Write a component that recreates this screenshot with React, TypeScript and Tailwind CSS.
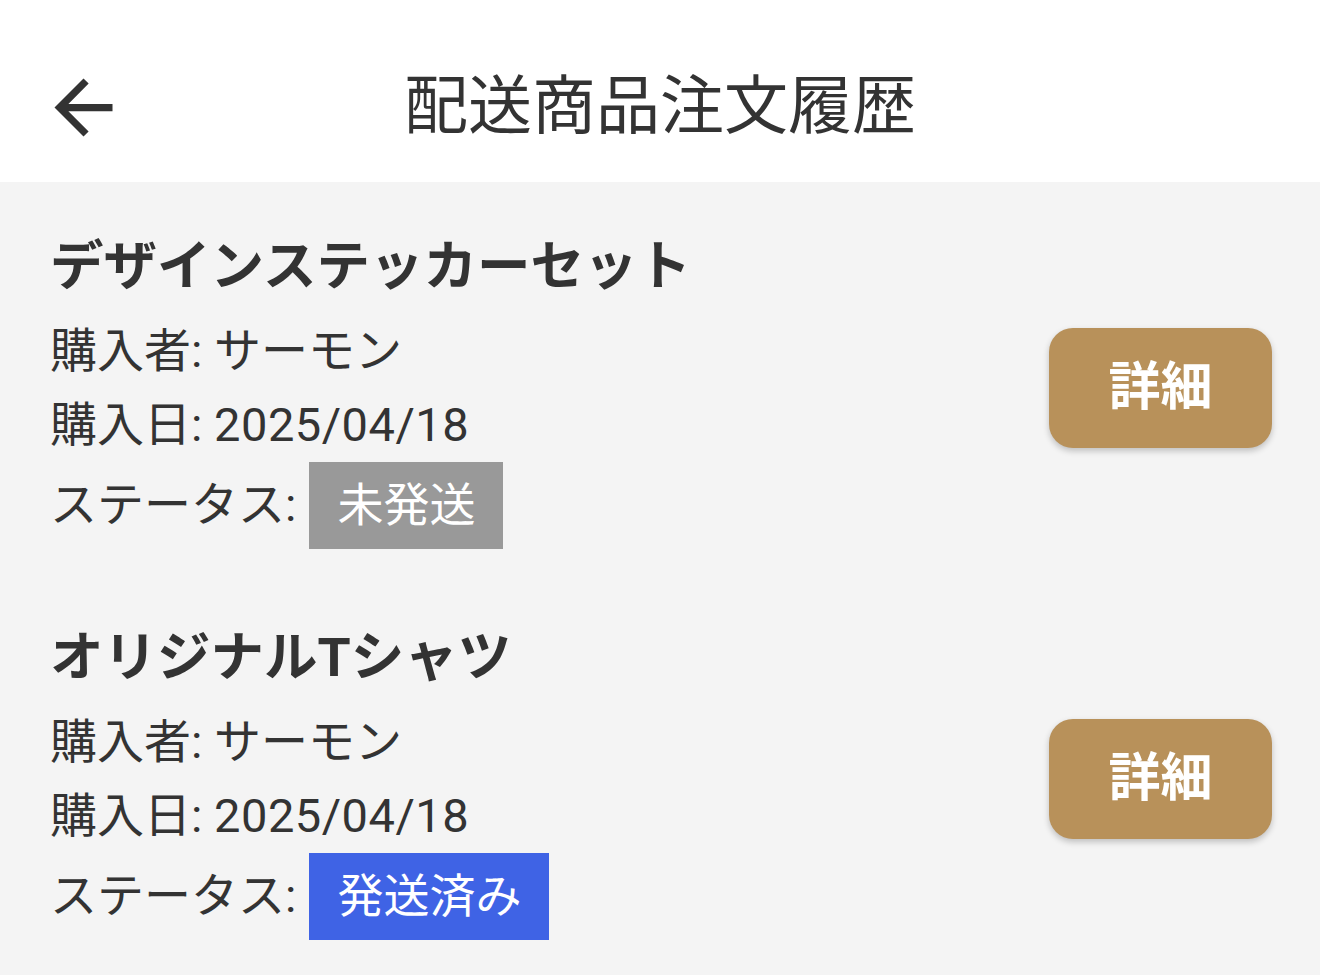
import React from "react";
import { MdArrowBack } from "react-icons/md";

type Order = {
  name: string;
  buyer: string;
  date: string;
  status: string;
  shipped: boolean;
};

const orders: Order[] = [
  { name: "デザインステッカーセット", buyer: "サーモン", date: "2025/04/18", status: "未発送", shipped: false },
  { name: "オリジナルTシャツ", buyer: "サーモン", date: "2025/04/18", status: "発送済み", shipped: true },
];

function OrderItem({ o }: { o: Order }) {
  return (
    <div className="flex items-center justify-between">
      <div className="flex flex-col">
        <div className="text-[53.5px] leading-[64px] font-bold text-[#333333] mb-[15px]">{o.name}</div>
        <div className="text-[47px] leading-[74px] text-[#333333]">購入者: {o.buyer}</div>
        <div className="text-[47px] leading-[74px] text-[#333333]">
          購入日: <span className="tracking-[0.5px]">{o.date}</span>
        </div>
        <div className="flex items-center h-[87px]">
          <span className="text-[47px] text-[#333333] mr-[13px]">ステータス:</span>
          <span
            className={
              o.shipped
                ? "h-[87px] flex items-center px-[28px] text-[46px] text-white bg-[#3f63e5]"
                : "h-[87px] flex items-center px-[28px] text-[46px] text-white bg-[#999999]"
            }
          >
            {o.status}
          </span>
        </div>
      </div>
      <button className="w-[223px] h-[120px] rounded-[24px] bg-[#b8915a] text-white text-[52px] font-bold shadow-[0_3px_6px_rgba(0,0,0,0.22)] flex items-center justify-center mt-[-8px]">
        詳細
      </button>
    </div>
  );
}

export default function App() {
  return (
    <div
      className="w-[1320px] h-[975px] bg-[#f4f4f4] overflow-hidden"
      style={{ fontFamily: '"Roboto", "Noto Sans CJK JP", sans-serif' }}
    >
      <header className="h-[182px] bg-white flex items-center pt-[32px]">
        <div className="w-[180px] pl-[40px] flex items-center">
          <MdArrowBack size={87} color="#333333" />
        </div>
        <h1 className="flex-1 text-center text-[64px] font-normal text-[#333333] leading-none">配送商品注文履歴</h1>
        <div className="w-[180px]" />
      </header>
      <main className="pt-[53px] pl-[50px] pr-[48px] flex flex-col gap-[77px]">
        {orders.map((o) => (
          <OrderItem key={o.name} o={o} />
        ))}
      </main>
    </div>
  );
}
